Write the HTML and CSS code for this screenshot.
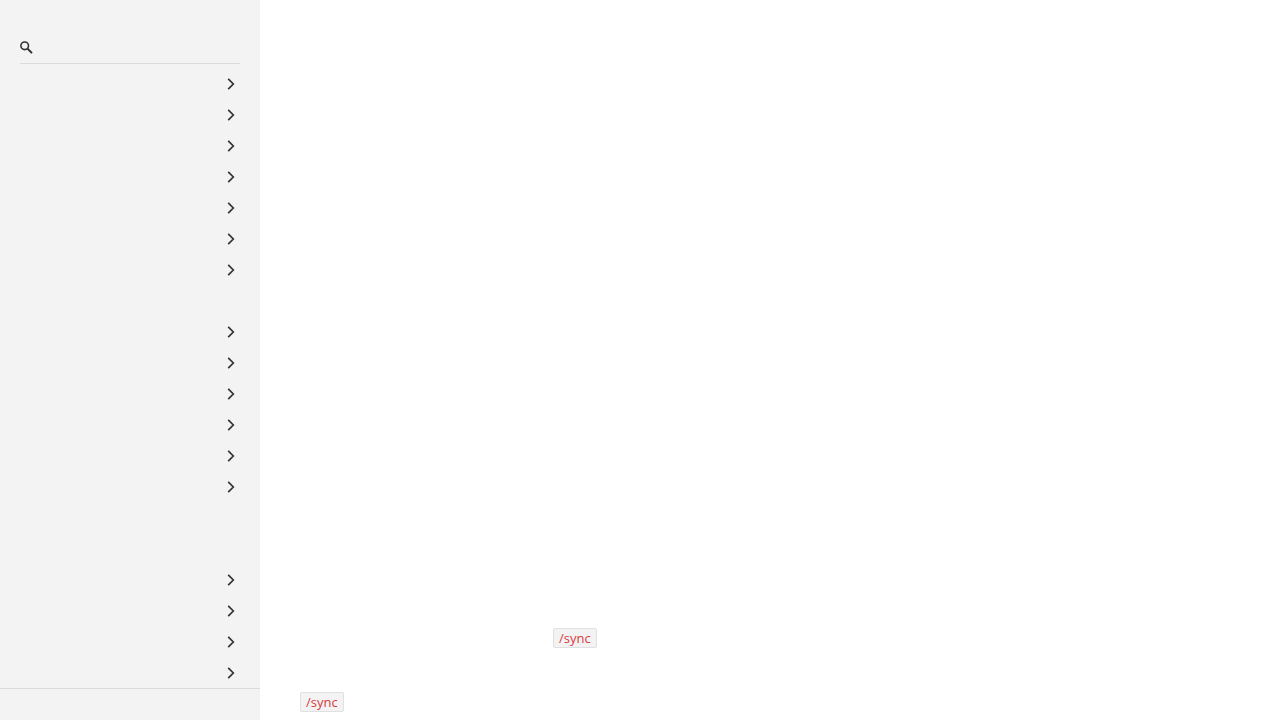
FILE: index.html
```
<!DOCTYPE html>
<html lang="en">
  <head>
    <meta charset="utf-8">
    <title>API Reference</title>
    <link rel="stylesheet" href="styles.css">
  </head>
  <body>
    <svg class="sprite" aria-hidden="true">
      <symbol id="chevron" viewBox="0 0 8 12">
        <path d="M1.2 0.9 L6.3 6 L1.2 11.1" fill="none" stroke="#333" stroke-width="1.7" />
      </symbol>
    </svg>

    <aside class="sidebar">
      <div class="search">
        <svg class="search-icon" viewBox="0 0 13 13" aria-hidden="true">
          <circle cx="4.7" cy="4.8" r="3.8" fill="none" stroke="#333" stroke-width="1.6" />
          <path d="M7.6 7.7 L12 12.1" stroke="#333" stroke-width="2" />
        </svg>
        <input type="text" class="search-input" aria-label="Search">
      </div>

      <ul class="menu">
        <li><button class="menu-item" aria-label="Expand"><svg><use href="#chevron" /></svg></button></li>
        <li><button class="menu-item" aria-label="Expand"><svg><use href="#chevron" /></svg></button></li>
        <li><button class="menu-item" aria-label="Expand"><svg><use href="#chevron" /></svg></button></li>
        <li><button class="menu-item" aria-label="Expand"><svg><use href="#chevron" /></svg></button></li>
        <li><button class="menu-item" aria-label="Expand"><svg><use href="#chevron" /></svg></button></li>
        <li><button class="menu-item" aria-label="Expand"><svg><use href="#chevron" /></svg></button></li>
        <li><button class="menu-item" aria-label="Expand"><svg><use href="#chevron" /></svg></button></li>
        <li></li>
        <li><button class="menu-item" aria-label="Expand"><svg><use href="#chevron" /></svg></button></li>
        <li><button class="menu-item" aria-label="Expand"><svg><use href="#chevron" /></svg></button></li>
        <li><button class="menu-item" aria-label="Expand"><svg><use href="#chevron" /></svg></button></li>
        <li><button class="menu-item" aria-label="Expand"><svg><use href="#chevron" /></svg></button></li>
        <li><button class="menu-item" aria-label="Expand"><svg><use href="#chevron" /></svg></button></li>
        <li><button class="menu-item" aria-label="Expand"><svg><use href="#chevron" /></svg></button></li>
        <li></li>
        <li></li>
        <li><button class="menu-item" aria-label="Expand"><svg><use href="#chevron" /></svg></button></li>
        <li><button class="menu-item" aria-label="Expand"><svg><use href="#chevron" /></svg></button></li>
        <li><button class="menu-item" aria-label="Expand"><svg><use href="#chevron" /></svg></button></li>
        <li><button class="menu-item" aria-label="Expand"><svg><use href="#chevron" /></svg></button></li>
      </ul>

      <div class="sidebar-footer"></div>
    </aside>

    <main class="content">
      <p class="indented"><code>/sync</code></p>
      <p><code>/sync</code></p>
    </main>
  </body>
</html>
```

FILE: styles.css
```
* {
  box-sizing: border-box;
}
body {
  display: flex;
  min-height: 100vh;
  margin: 0;
  background-color: #fff;
  color: #333;
  font-family: "Open Sans", sans-serif;
  font-size: 13px;
}
.sprite {
  display: none;
}
.sidebar {
  display: flex;
  flex-direction: column;
  flex: 0 0 260px;
  height: 100vh;
  background-color: #f3f3f3;
}
.search {
  display: flex;
  align-items: center;
  height: 32px;
  margin: 32px 20px 4px;
  border-bottom: 1px solid #dadada;
}
.search-icon {
  flex: none;
  width: 13px;
  height: 13px;
}
.search-input {
  flex: 1;
  min-width: 0;
  padding: 0 8px;
  border: 0;
  outline: 0;
  background: transparent;
  font: inherit;
}
.menu {
  flex: 1;
  min-height: 0;
  margin: 0;
  padding: 0;
  overflow: hidden;
  list-style: none;
}
.menu li {
  height: 31px;
}
.menu-item {
  display: flex;
  align-items: center;
  justify-content: flex-end;
  width: 100%;
  height: 100%;
  padding: 0 25px;
  border: 0;
  background: transparent;
  cursor: pointer;
}
.menu-item svg {
  width: 8px;
  height: 12px;
}
.sidebar-footer {
  flex: none;
  height: 32px;
  border-top: 1px solid #dadada;
}
.content {
  display: flex;
  flex-direction: column;
  flex: 1;
  justify-content: flex-end;
  gap: 44px;
  padding: 0 40px 8px;
}
.content p {
  display: flex;
  margin: 0;
}
.content .indented {
  padding-left: 253px;
}
code {
  padding: 0 5px;
  border: 1px solid #e0e0e0;
  border-radius: 2px;
  background-color: #f3f3f3;
  color: #d93a3f;
  font-family: inherit;
  font-size: 13px;
  line-height: 18px;
}
```
